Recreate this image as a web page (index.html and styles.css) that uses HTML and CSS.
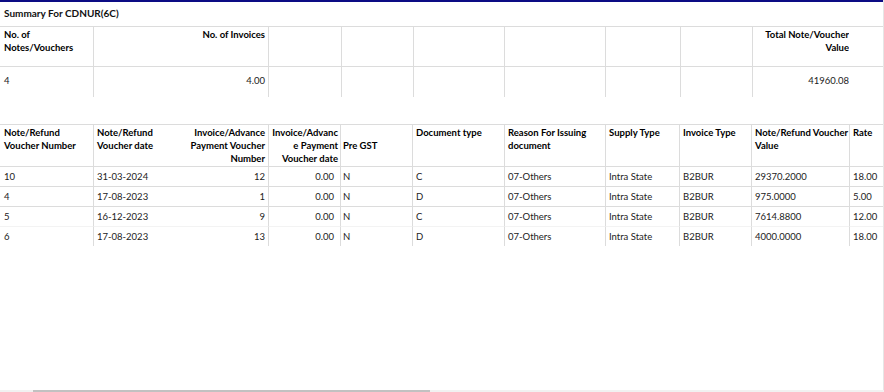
FILE: index.html
```html
<!DOCTYPE html>
<html>
<head>
<meta charset="utf-8">
<title>Summary For CDNUR(6C)</title>
<link rel="stylesheet" href="styles.css">
</head>
<body>
<div class="frame">
  <div class="viewport">
    <div class="content">
      <div class="title">Summary For CDNUR(6C)</div>
      <table class="grid summary">
        <colgroup>
          <col class="w93"><col class="w175"><col class="w73"><col class="w72"><col class="w91"><col class="w101"><col class="w75"><col class="w72"><col class="w97"><col class="w34">
        </colgroup>
        <tr class="head h40">
          <th class="first">No. of Notes/Vouchers</th>
          <th class="r">No. of Invoices</th>
          <th></th><th></th><th></th><th></th><th></th><th></th>
          <th class="r pr0">Total Note/Voucher Value</th>
          <th class="nb"></th>
        </tr>
        <tr class="body h31">
          <td class="first">4</td>
          <td class="r">4.00</td>
          <td></td><td></td><td></td><td></td><td></td><td></td>
          <td class="r pr0">41960.08</td>
          <td class="nb"></td>
        </tr>
      </table>

      <table class="grid detail">
        <colgroup>
          <col class="w93"><col class="w90"><col class="w85"><col class="w72"><col class="w72"><col class="w92"><col class="w101"><col class="w74"><col class="w72"><col class="w98"><col class="w34">
        </colgroup>
        <tr class="head h42">
          <th class="first">Note/Refund Voucher Number</th>
          <th>Note/Refund Voucher date</th>
          <th class="r nb">Invoice/Advance Payment Voucher Number</th>
          <th class="r wrap">Invoice/Advance Payment Voucher date</th>
          <th class="mid">Pre GST</th>
          <th>Document type</th>
          <th>Reason For Issuing document</th>
          <th>Supply Type</th>
          <th>Invoice Type</th>
          <th class="pr0">Note/Refund Voucher Value</th>
          <th>Rate</th>
        </tr>
        <tr class="body h20">
          <td class="first">10</td><td>31-03-2024</td><td class="r nb">12</td><td class="r pr">0.00</td><td class="tight">N</td><td>C</td><td>07-Others</td><td>Intra State</td><td>B2BUR</td><td>29370.2000</td><td>18.00</td>
        </tr>
        <tr class="body h20">
          <td class="first">4</td><td>17-08-2023</td><td class="r nb">1</td><td class="r pr">0.00</td><td class="tight">N</td><td>D</td><td>07-Others</td><td>Intra State</td><td>B2BUR</td><td>975.0000</td><td>5.00</td>
        </tr>
        <tr class="body h20">
          <td class="first">5</td><td>16-12-2023</td><td class="r nb">9</td><td class="r pr">0.00</td><td class="tight">N</td><td>C</td><td>07-Others</td><td>Intra State</td><td>B2BUR</td><td>7614.8800</td><td>12.00</td>
        </tr>
        <tr class="body h20 faint">
          <td class="first">6</td><td>17-08-2023</td><td class="r nb">13</td><td class="r pr">0.00</td><td class="tight">N</td><td>D</td><td>07-Others</td><td>Intra State</td><td>B2BUR</td><td>4000.0000</td><td>18.00</td>
        </tr>
      </table>
    </div>
    <div class="vscroll"></div>
  </div>
  <div class="hscroll"><div class="thumb"></div></div>
</div>
</body>
</html>
```

FILE: styles.css
```css
html, body {
  margin: 0;
  padding: 0;
  background: #ffffff;
}

body {
  font-family: Lato, "Open Sans", sans-serif;
  color: #222222;
}

.frame {
  width: 884px;
  height: 392px;
  display: flex;
  flex-direction: column;
  overflow: hidden;
}

.viewport {
  flex: 1;
  display: flex;
  min-height: 0;
}

.content {
  width: 883px;
  overflow: hidden;
  border-top: 2px solid #0c0c84;
}

.vscroll {
  width: 1px;
  background: #e6e6e6;
}

.hscroll {
  height: 2px;
  background: #f1f1f1;
  display: flex;
}

.hscroll .thumb {
  margin-left: 33px;
  width: 397px;
  background: #c1c1c1;
}

.title {
  height: 24px;
  line-height: 23px;
  padding-left: 4px;
  font-size: 10px;
  font-weight: bold;
  color: #111111;
}

.grid {
  width: 883px;
  table-layout: fixed;
  border-collapse: separate;
  border-spacing: 0;
  font-size: 9.5px;
}

.detail {
  margin-top: 27px;
}

.w93 { width: 93px; }
.w175 { width: 175px; }
.w73 { width: 73px; }
.w72 { width: 72px; }
.w91 { width: 91px; }
.w101 { width: 101px; }
.w75 { width: 75px; }
.w97 { width: 97px; }
.w34 { width: 34px; }
.w90 { width: 90px; }
.w85 { width: 85px; }
.w92 { width: 92px; }
.w74 { width: 74px; }
.w98 { width: 98px; }

.grid th,
.grid td {
  border-top: 1px solid #dcdcdc;
  border-left: 1px solid #dcdcdc;
  padding: 0 3px;
  text-align: left;
  overflow: hidden;
  white-space: normal;
}

.grid th {
  font-weight: bold;
  color: #000000;
  vertical-align: top;
  line-height: 13px;
  padding-top: 1px;
}

.grid td {
  vertical-align: middle;
  line-height: 12px;
}

.grid .first {
  border-left: none;
  padding-left: 4px;
}

.grid .nb {
  border-left: none;
}

.grid .r {
  text-align: right;
}

.grid .pr {
  padding-right: 6px;
}

.grid .pr0 {
  padding-right: 0;
}

.grid .tight {
  padding-left: 2px;
}

.grid th.mid {
  vertical-align: middle;
  padding-top: 0;
  padding-left: 2px;
}

.grid th.wrap {
  overflow-wrap: anywhere;
  padding-left: 1px;
  padding-right: 2px;
}

.h40 { height: 40px; }
.h31 { height: 31px; }
.h42 { height: 42px; }
.h20 { height: 20px; }

.summary .body td {
  padding-bottom: 3px;
}

.detail .faint td {
  border-top-color: #f3f3f3;
}
```
